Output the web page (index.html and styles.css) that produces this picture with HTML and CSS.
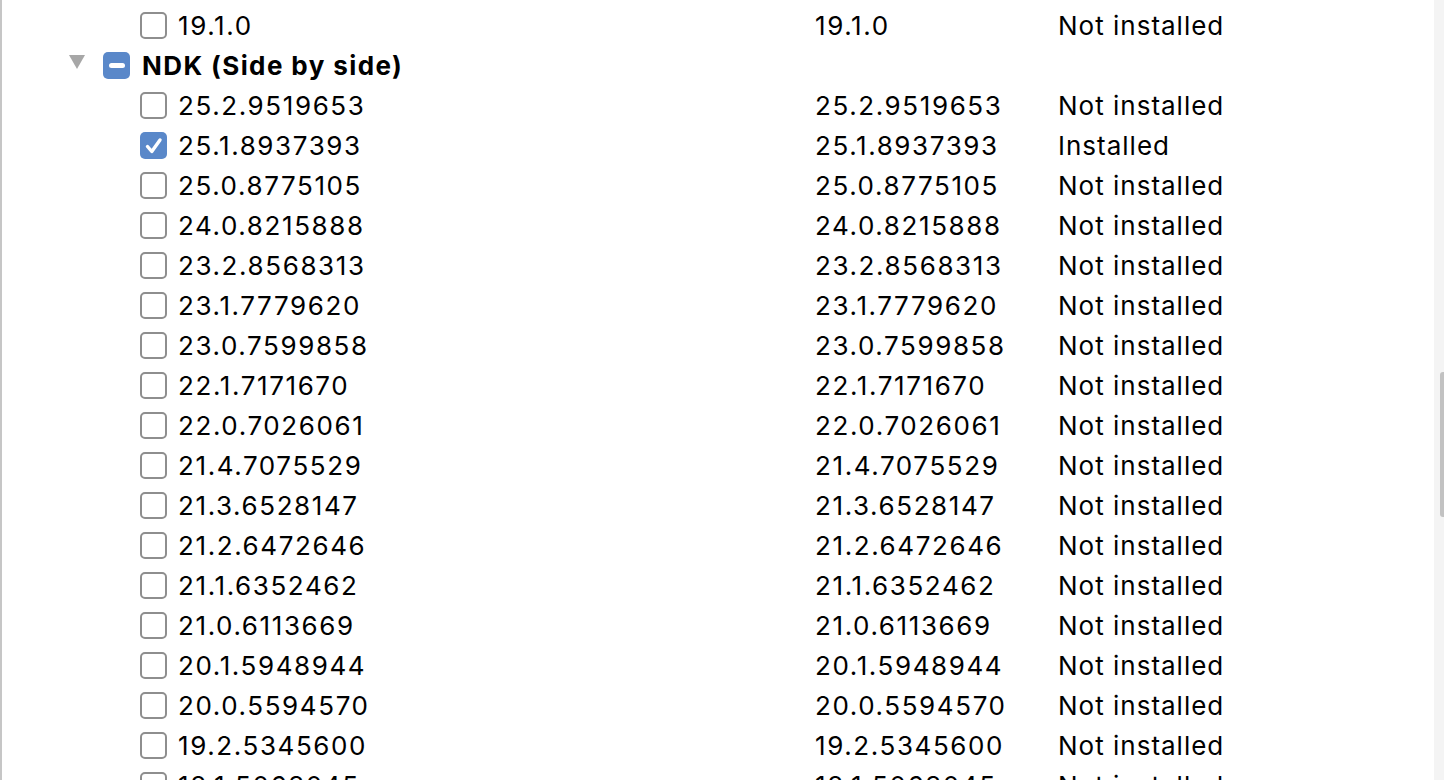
FILE: index.html
```html
<!DOCTYPE html>
<html>
<head>
<meta charset="utf-8">
<link rel="stylesheet" href="styles.css">
</head>
<body>
<div class="panel">
  <div class="tree">
    <div class="row">
      <div class="name child"><span class="cb"></span><span class="label">19.1.0</span></div>
      <div class="ver">19.1.0</div>
      <div class="status">Not installed</div>
    </div>
    <div class="row">
      <div class="name group">
        <span class="tri"></span>
        <span class="cb partial"><span class="dash"></span></span>
        <span class="label bold">NDK (Side by side)</span>
      </div>
      <div class="ver"></div>
      <div class="status"></div>
    </div>
    <div class="row"><div class="name child"><span class="cb"></span><span class="label">25.2.9519653</span></div><div class="ver">25.2.9519653</div><div class="status">Not installed</div></div>
    <div class="row"><div class="name child"><span class="cb checked"><svg viewBox="0 0 26 26" width="26" height="26"><path d="M6.5 13.5 L10.8 18.5 L19 7" fill="none" stroke="#fff" stroke-width="3.4" stroke-linecap="round" stroke-linejoin="round"/></svg></span><span class="label">25.1.8937393</span></div><div class="ver">25.1.8937393</div><div class="status">Installed</div></div>
    <div class="row"><div class="name child"><span class="cb"></span><span class="label">25.0.8775105</span></div><div class="ver">25.0.8775105</div><div class="status">Not installed</div></div>
    <div class="row"><div class="name child"><span class="cb"></span><span class="label">24.0.8215888</span></div><div class="ver">24.0.8215888</div><div class="status">Not installed</div></div>
    <div class="row"><div class="name child"><span class="cb"></span><span class="label">23.2.8568313</span></div><div class="ver">23.2.8568313</div><div class="status">Not installed</div></div>
    <div class="row"><div class="name child"><span class="cb"></span><span class="label">23.1.7779620</span></div><div class="ver">23.1.7779620</div><div class="status">Not installed</div></div>
    <div class="row"><div class="name child"><span class="cb"></span><span class="label">23.0.7599858</span></div><div class="ver">23.0.7599858</div><div class="status">Not installed</div></div>
    <div class="row"><div class="name child"><span class="cb"></span><span class="label">22.1.7171670</span></div><div class="ver">22.1.7171670</div><div class="status">Not installed</div></div>
    <div class="row"><div class="name child"><span class="cb"></span><span class="label">22.0.7026061</span></div><div class="ver">22.0.7026061</div><div class="status">Not installed</div></div>
    <div class="row"><div class="name child"><span class="cb"></span><span class="label">21.4.7075529</span></div><div class="ver">21.4.7075529</div><div class="status">Not installed</div></div>
    <div class="row"><div class="name child"><span class="cb"></span><span class="label">21.3.6528147</span></div><div class="ver">21.3.6528147</div><div class="status">Not installed</div></div>
    <div class="row"><div class="name child"><span class="cb"></span><span class="label">21.2.6472646</span></div><div class="ver">21.2.6472646</div><div class="status">Not installed</div></div>
    <div class="row"><div class="name child"><span class="cb"></span><span class="label">21.1.6352462</span></div><div class="ver">21.1.6352462</div><div class="status">Not installed</div></div>
    <div class="row"><div class="name child"><span class="cb"></span><span class="label">21.0.6113669</span></div><div class="ver">21.0.6113669</div><div class="status">Not installed</div></div>
    <div class="row"><div class="name child"><span class="cb"></span><span class="label">20.1.5948944</span></div><div class="ver">20.1.5948944</div><div class="status">Not installed</div></div>
    <div class="row"><div class="name child"><span class="cb"></span><span class="label">20.0.5594570</span></div><div class="ver">20.0.5594570</div><div class="status">Not installed</div></div>
    <div class="row"><div class="name child"><span class="cb"></span><span class="label">19.2.5345600</span></div><div class="ver">19.2.5345600</div><div class="status">Not installed</div></div>
    <div class="row"><div class="name child"><span class="cb"></span><span class="label">18.1.5063045</span></div><div class="ver">18.1.5063045</div><div class="status">Not installed</div></div>
  </div>
  <div class="scrollbar"><div class="thumb"></div></div>
</div>
</body>
</html>
```
FILE: styles.css
```css
html, body {
  margin: 0;
  padding: 0;
  background: #ffffff;
  overflow: hidden;
}
.panel {
  width: 1444px;
  height: 780px;
  display: flex;
  border-left: 2px solid #c6c6c6;
  box-sizing: border-box;
  overflow: hidden;
  font-family: Inter, "Liberation Sans", sans-serif;
  font-size: 26px;
  color: #000;
}
.tree {
  flex: 1;
  padding-top: 5px;
}
.row {
  height: 40px;
  display: flex;
  align-items: center;
}
.name {
  width: 813px;
  box-sizing: border-box;
  display: flex;
  align-items: center;
  flex-shrink: 0;
}
.name.child { padding-left: 138px; }
.name.group { padding-left: 67px; }
.ver {
  width: 243px;
  flex-shrink: 0;
  letter-spacing: 1.6px;
}
.status {
  letter-spacing: 1px;
}
.label {
  margin-left: 11px;
  letter-spacing: 1.6px;
}
.label.bold {
  font-weight: 700;
  margin-left: 12px;
  letter-spacing: 1.4px;
}
.cb {
  width: 27px;
  height: 27px;
  box-sizing: border-box;
  border: 2px solid #8e8e8e;
  border-radius: 5px;
  background: #fff;
  display: flex;
  align-items: center;
  justify-content: center;
  margin-top: 1px;
}
.cb.checked, .cb.partial {
  background: #5a88c9;
  border: none;
}
.cb svg { display: block; }
.dash {
  width: 16px;
  height: 5px;
  background: #fff;
  border-radius: 3px;
}
.tri {
  width: 0;
  height: 0;
  border-left: 8.5px solid transparent;
  border-right: 8.5px solid transparent;
  border-top: 14px solid #a7a7a7;
  margin-right: 18px;
  margin-top: -6px;
}
.scrollbar {
  width: 10px;
  background: #f4f4f4;
  flex-shrink: 0;
  position: relative;
}
.thumb {
  position: absolute;
  left: 6px;
  right: 0;
  top: 372px;
  height: 145px;
  background: #c2c2c2;
  border-radius: 3px 0 0 3px;
}
```
